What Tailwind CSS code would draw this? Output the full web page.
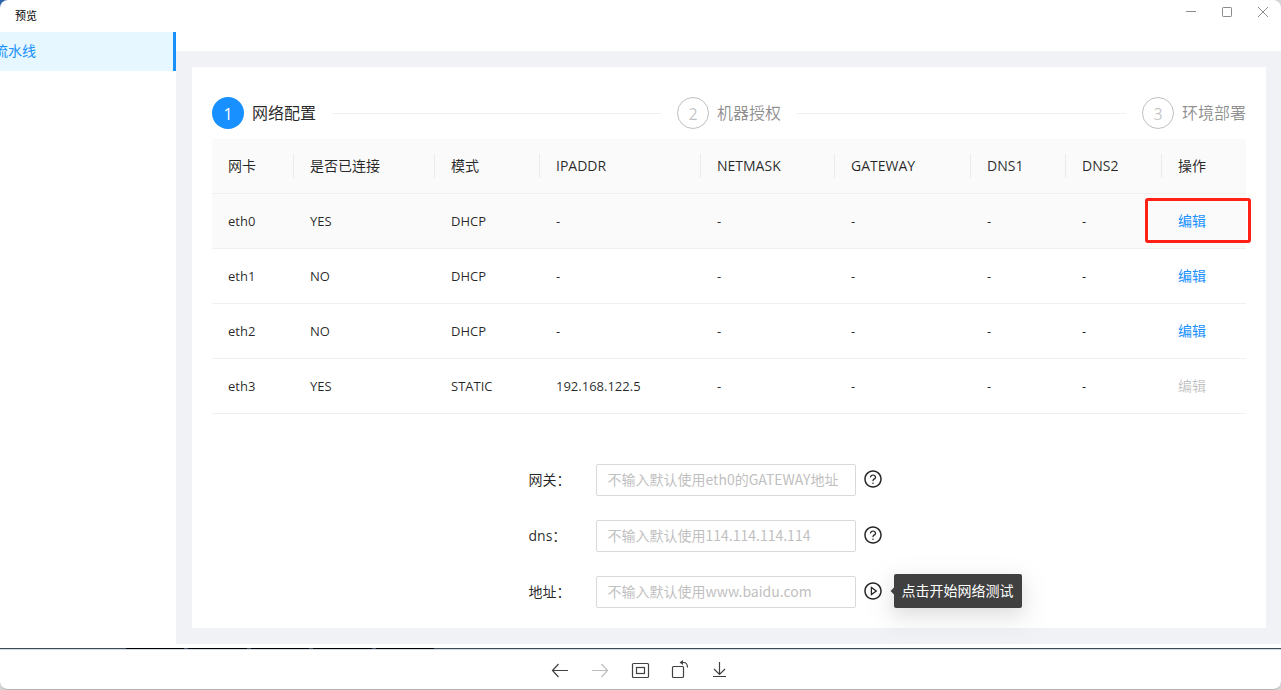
<!DOCTYPE html>
<html lang="zh-CN">
<head>
<meta charset="utf-8">
<title>预览</title>
<script src="https://cdn.jsdelivr.net/npm/@tailwindcss/browser@4"></script>
</head>
<body class="flex min-h-screen flex-col bg-[#d4d4d4] bg-[linear-gradient(#2f62ad,#2f62ad)] bg-size-[20px_20px] bg-no-repeat font-['Open_Sans','Noto_Sans_CJK_SC',sans-serif] text-sm text-black/85">
<div class="flex grow flex-col overflow-hidden rounded-lg border-b border-[#b4b4b4] bg-white">
  <header class="flex h-8 items-start justify-between pl-[15px] pr-3">
    <h1 class="text-[11px] leading-8 text-black">预览</h1>
    <div class="flex gap-6 pt-1.5 text-[#8c8c8c]">
      <button aria-label="最小化" class="size-3"><svg viewBox="0 0 12 12" class="size-3" fill="none" stroke="currentColor"><path d="M1 5.5h10"/></svg></button>
      <button aria-label="最大化" class="size-3"><svg viewBox="0 0 12 12" class="size-3" fill="none" stroke="currentColor"><rect x="1.5" y="1.5" width="9" height="9" rx=".7"/></svg></button>
      <button aria-label="关闭" class="size-3"><svg viewBox="0 0 12 12" class="size-3" fill="none" stroke="currentColor"><path d="M1 1l10 10M11 1L1 11"/></svg></button>
    </div>
  </header>

  <div class="flex grow">
    <nav class="w-44 shrink-0 overflow-hidden">
      <a href="#" class="block border-r-3 border-[#1890ff] bg-[#e6f7ff] pb-0.5 leading-[37px] text-[#1890ff]"><span class="-ml-1.5">流水线</span></a>
    </nav>
    <div class="flex min-w-0 grow flex-col pt-[19px]">
      <div class="grow bg-[#f0f2f5] pt-4 pr-[15px] pb-4 pl-4">
        <main class="bg-white px-5 pt-[30px] pb-5">
          <ol class="flex items-center gap-4 text-base">
            <li class="flex grow items-center gap-4">
              <span class="flex shrink-0 items-center gap-2"><span class="flex size-8 items-center justify-center rounded-full bg-[#1890ff] pt-0.5 text-white">1</span>网络配置</span>
              <span class="h-px grow bg-[#f0f0f0]"></span>
            </li>
            <li class="flex grow items-center gap-4 text-black/45">
              <span class="flex shrink-0 items-center gap-2"><span class="flex size-8 items-center justify-center rounded-full border border-black/25 pt-0.5 text-black/25">2</span>机器授权</span>
              <span class="h-px grow bg-[#f0f0f0]"></span>
            </li>
            <li class="flex shrink-0 items-center gap-2 text-black/45"><span class="flex size-8 items-center justify-center rounded-full border border-black/25 pt-0.5 text-black/25">3</span>环境部署</li>
          </ol>

          <table class="mt-2.5 w-full table-fixed border-separate border-spacing-0 text-left text-[13px] [&_td]:h-[55px] [&_td]:border-b [&_td]:border-[#f0f0f0] [&_td]:px-4 [&_th]:h-[55px] [&_th]:border-b [&_th]:border-[#f0f0f0] [&_th]:bg-[#fafafa] [&_th]:p-0 [&_th]:text-sm [&_th]:font-medium [&_th>div]:border-r [&_th>div]:border-black/6 [&_th>div]:px-4 [&_th>div]:leading-6 [&_th:last-child>div]:border-r-0">
            <colgroup><col class="w-[82px]"><col class="w-[141px]"><col class="w-[105px]"><col class="w-[161px]"><col class="w-[134px]"><col class="w-[136px]"><col class="w-[95px]"><col class="w-[96px]"><col class="w-[84px]"></colgroup>
            <thead>
              <tr><th><div class="font-normal">网卡</div></th><th><div class="font-normal">是否已连接</div></th><th><div class="font-normal">模式</div></th><th><div>IPADDR</div></th><th><div>NETMASK</div></th><th><div>GATEWAY</div></th><th><div>DNS1</div></th><th><div>DNS2</div></th><th><div class="font-normal">操作</div></th></tr>
            </thead>
            <tbody>
              <tr class="bg-[#fafafa]"><td>eth0</td><td>YES</td><td>DHCP</td><td>-</td><td>-</td><td>-</td><td>-</td><td>-</td><td class="relative"><a href="#" class="text-sm text-[#1890ff]">编辑</a><span class="pointer-events-none absolute top-1 -right-[5px] bottom-[5px] -left-[17px] rounded-[3px] border-3 border-[#ff1f14]"></span></td></tr>
              <tr><td>eth1</td><td>NO</td><td>DHCP</td><td>-</td><td>-</td><td>-</td><td>-</td><td>-</td><td><a href="#" class="text-sm text-[#1890ff]">编辑</a></td></tr>
              <tr><td>eth2</td><td>NO</td><td>DHCP</td><td>-</td><td>-</td><td>-</td><td>-</td><td>-</td><td><a href="#" class="text-sm text-[#1890ff]">编辑</a></td></tr>
              <tr><td>eth3</td><td>YES</td><td>STATIC</td><td>192.168.122.5</td><td>-</td><td>-</td><td>-</td><td>-</td><td><a aria-disabled="true" class="text-sm text-black/25">编辑</a></td></tr>
            </tbody>
          </table>

          <form class="mx-auto mt-[50px] flex w-[401px] flex-col gap-6">
            <div class="flex items-center">
              <label for="gateway" class="w-[67px]">网关：</label>
              <input id="gateway" placeholder="不输入默认使用eth0的GATEWAY地址" class="h-8 w-[260px] rounded-xs border border-[#d9d9d9] px-[11px] pb-0.5 font-['Noto_Sans_CJK_SC',sans-serif] placeholder:text-[#bfbfbf]">
              <button type="button" aria-label="网关说明" class="mb-0.5 ml-[7px]"><svg viewBox="0 0 1024 1024" class="size-5" fill="currentColor"><path d="M512 64C264.6 64 64 264.6 64 512s200.6 448 448 448 448-200.6 448-448S759.4 64 512 64zm0 820c-205.4 0-372-166.6-372-372s166.6-372 372-372 372 166.6 372 372-166.6 372-372 372z"/><path d="M623.6 316.7C593.6 290.4 554 276 512 276s-81.6 14.5-111.6 40.7C369.2 344 352 380.7 352 420v7.6c0 4.4 3.6 8 8 8h48c4.4 0 8-3.6 8-8V420c0-44.1 43.1-80 96-80s96 35.9 96 80c0 31.1-22 59.6-56.1 72.7-21.2 8.1-39.2 22.3-52.1 40.9-13.1 19-19.9 41.8-19.9 64.9V620c0 4.4 3.6 8 8 8h48c4.4 0 8-3.6 8-8v-22.7a48.3 48.3 0 0 1 30.9-44.8c59-22.7 97.1-74.7 97.1-132.5.1-39.3-17.1-76-48.3-103.3zM472 732a40 40 0 1 0 80 0 40 40 0 1 0-80 0z"/></svg></button>
            </div>
            <div class="flex items-center">
              <label for="dns" class="w-[67px]">dns：</label>
              <input id="dns" placeholder="不输入默认使用114.114.114.114" class="h-8 w-[260px] rounded-xs border border-[#d9d9d9] px-[11px] pb-0.5 font-['Noto_Sans_CJK_SC',sans-serif] placeholder:text-[#bfbfbf]">
              <button type="button" aria-label="dns说明" class="mb-0.5 ml-[7px]"><svg viewBox="0 0 1024 1024" class="size-5" fill="currentColor"><path d="M512 64C264.6 64 64 264.6 64 512s200.6 448 448 448 448-200.6 448-448S759.4 64 512 64zm0 820c-205.4 0-372-166.6-372-372s166.6-372 372-372 372 166.6 372 372-166.6 372-372 372z"/><path d="M623.6 316.7C593.6 290.4 554 276 512 276s-81.6 14.5-111.6 40.7C369.2 344 352 380.7 352 420v7.6c0 4.4 3.6 8 8 8h48c4.4 0 8-3.6 8-8V420c0-44.1 43.1-80 96-80s96 35.9 96 80c0 31.1-22 59.6-56.1 72.7-21.2 8.1-39.2 22.3-52.1 40.9-13.1 19-19.9 41.8-19.9 64.9V620c0 4.4 3.6 8 8 8h48c4.4 0 8-3.6 8-8v-22.7a48.3 48.3 0 0 1 30.9-44.8c59-22.7 97.1-74.7 97.1-132.5.1-39.3-17.1-76-48.3-103.3zM472 732a40 40 0 1 0 80 0 40 40 0 1 0-80 0z"/></svg></button>
            </div>
            <div class="flex items-center">
              <label for="address" class="w-[67px]">地址：</label>
              <input id="address" placeholder="不输入默认使用www.baidu.com" class="h-8 w-[260px] rounded-xs border border-[#d9d9d9] px-[11px] pb-0.5 font-['Noto_Sans_CJK_SC',sans-serif] placeholder:text-[#bfbfbf]">
              <div class="relative mb-0.5 ml-[7px]">
                <button type="button" aria-label="开始网络测试" aria-describedby="tip" class="block"><svg viewBox="0 0 1024 1024" class="size-5" fill="currentColor"><path d="M512 64C264.6 64 64 264.6 64 512s200.6 448 448 448 448-200.6 448-448S759.4 64 512 64zm0 820c-205.4 0-372-166.6-372-372s166.6-372 372-372 372 166.6 372 372-166.6 372-372 372z"/><path d="M719.4 499.1l-296.1-215A15.9 15.9 0 0 0 398 297v430c0 13.1 14.8 20.5 25.3 12.9l296.1-215a15.9 15.9 0 0 0 0-25.8zm-257.6 134V390.9L628.5 512 461.8 633.1z"/></svg></button>
                <div id="tip" role="tooltip" class="absolute top-1/2 left-[31px] -translate-y-1/2 rounded-xs bg-[#404040] px-2 leading-[34px] whitespace-nowrap text-white shadow-[0_9px_28px_8px_rgba(0,0,0,0.05),0_6px_16px_rgba(0,0,0,0.08)]"><span class="absolute top-1/2 -left-0.5 size-[7px] -translate-y-1/2 rotate-45 bg-[#404040]"></span>点击开始网络测试</div>
              </div>
            </div>
          </form>
        </main>
      </div>
    </div>
  </div>

  <div class="mt-1 h-0.5 border-t border-[#3f4a56] bg-[#cfdbe6]"><div class="relative -top-px ml-[126px] flex h-px w-[308px] gap-1"><span class="grow bg-black"></span><span class="grow bg-black"></span><span class="grow bg-black"></span><span class="grow bg-black"></span><span class="grow bg-black"></span></div></div>
  <footer class="flex h-[39px] items-center justify-center gap-5 pr-0.5 text-[#404040]">
    <button aria-label="后退"><svg viewBox="0 0 20 20" class="size-5" fill="none" stroke="currentColor" stroke-width="1.2"><path d="M2.5 10.5H18M8.5 4L2.5 10.5l6 6.500"/></svg></button>
    <button aria-label="前进" class="text-[#bdbdbd]"><svg viewBox="0 0 20 20" class="size-5" fill="none" stroke="currentColor" stroke-width="1.2"><path d="M2 10.500h15.500M11.500 4l6 6.500-6 6.500"/></svg></button>
    <button aria-label="适应窗口"><svg viewBox="0 0 20 20" class="size-5" fill="none" stroke="currentColor" stroke-width="1.2"><rect x="2.500" y="3.500" width="16" height="14" rx="1"/><rect x="6.500" y="7.500" width="8" height="6"/></svg></button>
    <button aria-label="旋转"><svg viewBox="0 0 20 20" class="size-5" fill="none" stroke="currentColor" stroke-width="1.2"><rect x="2.500" y="6.500" width="11" height="11" rx="1"/><path d="M11 2.500h2.500c2.500 0 4 1.500 4 5"/><path d="M13 0v5L9.500 2.500z" fill="currentColor" stroke="none"/></svg></button>
    <button aria-label="下载"><svg viewBox="0 0 20 20" class="size-5" fill="none" stroke="currentColor" stroke-width="1.2"><path d="M9.500 2v12M4 9l5.500 5.500L15 9M3 16.500h13"/></svg></button>
  </footer>
</div>
</body>
</html>
